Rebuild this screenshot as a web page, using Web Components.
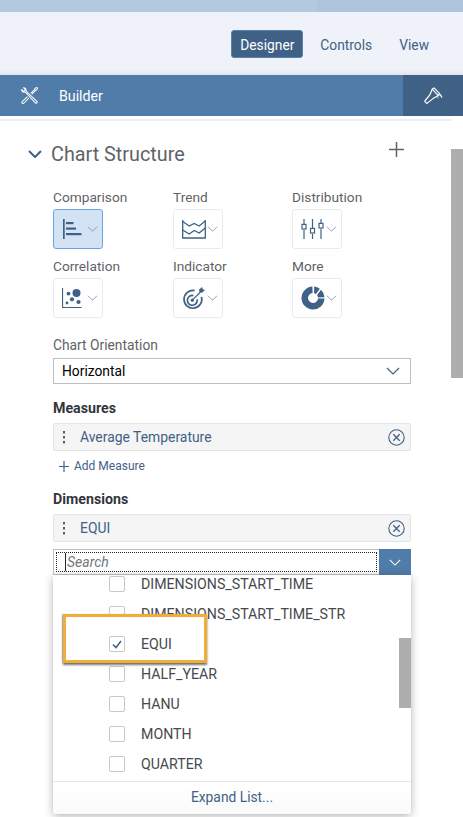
<!DOCTYPE html>
<html><head><meta charset="utf-8"><style>
html,body{margin:0;padding:0;background:#fff;height:817px;overflow:hidden}
body{font-family:Roboto,"Noto Sans",sans-serif;font-size:14px;color:#32363a}
</style></head><body>
<x-shell>
  <x-tabs><x-tab active>Designer</x-tab><x-tab>Controls</x-tab><x-tab>View</x-tab></x-tabs>
  <x-builder-bar>Builder</x-builder-bar>
  <x-panel>
    <x-section-head>Chart Structure</x-section-head>
    <x-type-grid>
      <x-chart-type label="Comparison" selected icon="bar"></x-chart-type>
      <x-chart-type label="Trend" icon="area"></x-chart-type>
      <x-chart-type label="Distribution" icon="box"></x-chart-type>
      <x-chart-type label="Correlation" icon="scatter"></x-chart-type>
      <x-chart-type label="Indicator" icon="target"></x-chart-type>
      <x-chart-type label="More" icon="donut"></x-chart-type>
    </x-type-grid>
    <x-label style="margin-top:19px">Chart Orientation</x-label>
    <x-select style="margin-top:5px">Horizontal</x-select>
    <x-label bold style="margin-top:16px">Measures</x-label>
    <x-token style="margin-top:7px">Average Temperature</x-token>
    <x-add-link style="margin-top:7px">Add Measure</x-add-link>
    <x-label bold style="margin-top:17px">Dimensions</x-label>
    <x-token style="margin-top:7px">EQUI</x-token>
    <x-search style="margin-top:7px"></x-search>
    <x-dropdown footer="Expand List...">
      <x-option>DIMENSIONS_START_TIME</x-option>
      <x-option>DIMENSIONS_START_TIME_STR</x-option>
      <x-option checked>EQUI</x-option>
      <x-option>HALF_YEAR</x-option>
      <x-option>HANU</x-option>
      <x-option>MONTH</x-option>
      <x-option>QUARTER</x-option>
    </x-dropdown>
  </x-panel>
</x-shell>
<script>
const C='#3f6185';
const chev=(col,w=14,h=8,sw=1.2)=>`<svg style="display:block" width="${w}" height="${h}" viewBox="0 0 14 8" fill="none" stroke="${col}" stroke-width="${sw}"><path d="M1 1l6 6 6-6"/></svg>`;
const icons={
bar:`<svg width="20" height="20" viewBox="0 0 20 20" fill="${C}"><rect x="1" y="0" width="1.7" height="20"/><rect x="4" y="3" width="7.5" height="2.2"/><rect x="4" y="8.5" width="10" height="2.2"/><rect x="4" y="14" width="15.5" height="2.2"/></svg>`,
area:`<svg width="24" height="20" viewBox="0 0 24 20" fill="none" stroke="${C}" stroke-width="1.3"><path d="M.7 1v18h22.6V1"/><path d="M.7 2.5l6.5 4.5 5-2.5 5 2.5 6-5"/><path d="M.7 11l6.5 4 5-3.5 5 2.5 6-5"/></svg>`,
box:`<svg width="23" height="20" viewBox="0 0 23 20" fill="none" stroke="${C}" stroke-width="1.2"><path d="M3 0v5M3 11v9M11.5 0v9M11.5 15v5M20 0v4M20 10v10"/><rect x="1" y="5.4" width="4" height="4.6"/><rect x="9.5" y="9.4" width="4" height="4.6"/><rect x="18" y="4.4" width="4" height="4.6"/></svg>`,
scatter:`<svg width="20" height="20" viewBox="0 0 20 20" fill="${C}"><path d="M0 0h1.1v18.9H19.6V20H0z"/><circle cx="14.5" cy="5" r="4"/><circle cx="6.5" cy="5.6" r="1.9"/><circle cx="10" cy="11.3" r="2.1"/><circle cx="16.5" cy="14" r="2.1"/><circle cx="5" cy="15" r="1.4"/></svg>`,
target:`<svg width="23" height="23" viewBox="0 0 23 23" fill="none" stroke="${C}" stroke-width="1.7"><path d="M12.6 3.6A8.9 8.9 0 1 0 19.5 10"/><path d="M11.4 8.6a4.9 4.9 0 1 0 3.7 3.8"/><circle cx="10.3" cy="13.2" r="1.6" fill="${C}" stroke="none"/><path d="M10.3 13.2L18.5 5" stroke-width="1.2"/><path d="M17 2.8l.6 2.4 2.4.6L23 3l-2.2-.7L20 0z" fill="${C}" stroke="none"/></svg>`,
donut:`<svg width="24" height="24" viewBox="-12 -12 24 24" fill="${C}">
<path d="M1.2-11.5A11.5 11.5 0 0 1 6.8-9.2L3-4.1A5 5 0 0 0 1-4.8z"/>
<path d="M8-8.2A11.5 11.5 0 0 1 11.5-.8L5-.5A5 5 0 0 0 4.1-3z"/>
<path d="M11.5 .6A11.5 11.5 0 1 1-.6-11.5L-.4-5A5 5 0 1 0 5 .4z"/></svg>`
};
function def(name,css,html){
  customElements.define(name,class extends HTMLElement{
    connectedCallback(){
      if(this.shadowRoot)return;
      const s=this.attachShadow({mode:'open'});
      const h=typeof html==='function'?html(this):html;
      s.innerHTML=`<style>${css}</style>${h}`;
    }
  });
}
def('x-shell',':host{display:block;position:relative;height:817px;overflow:hidden} .top{height:12px;background:linear-gradient(90deg,#b3c9df 0,#b3c9df 317px,#aec4dd 317px)}','<div class="top"></div><slot></slot>');
def('x-tabs',':host{display:flex;justify-content:flex-end;align-items:flex-start;box-sizing:border-box;height:63px;padding:18px 33px 0 0;background:#eff3f9;box-shadow:inset 0 -6px 6px -6px rgba(0,0,0,.12)}','<slot></slot>');
def('x-tab',`:host{display:block;box-sizing:border-box;height:28px;line-height:28px;font-size:13.8px;color:${C};margin-left:25px;border:1px solid transparent;border-radius:3px;text-align:center}
:host([active]){background:${C};color:#fff;border-color:#5a82ac;width:72px;margin-right:-9px}`,'<slot></slot>');
def('x-builder-bar',`:host{display:flex;align-items:center;height:41px;background:#507caa;color:#fff;font-size:14.2px}
.t{margin:0 0 0 21px;width:17px;height:17px} .l{margin-left:21px;flex:1} .r{width:60px;height:41px;background:${C};display:flex;align-items:center;justify-content:center}`,
`<svg class="t" viewBox="0 0 18 18" fill="none" stroke="#fff" stroke-width="1.1" stroke-linejoin="round"><path d="M5.4 3.4C5.4 1.8 4.1.6 2.7.7L4.6 2.8 2.8 4.6.7 2.7C.6 4.2 1.8 5.5 3.4 5.5c.4 0 .7-.1 1-.2l10.8 11.4c.5.5 1.2.5 1.6 0 .5-.5.5-1.1 0-1.6L5.3 4.4c.1-.3.1-.7.1-1z"/><path d="M6.9 10.1L1.3 15.6c-.5.5-.5 1.1 0 1.6s1.1.5 1.6 0l5.6-5.5M10.4 6.7l4.2-4.1.3-1.1L16.6.5l1 1-1 1.7-1.1.3-3.9 4.1"/></svg>
<span class="l"><slot></slot></span>
<span class="r"><svg width="19" height="18" viewBox="0 0 19 18" fill="none" stroke="#fff" stroke-width="1.2" stroke-linejoin="round"><path d="M8.2 2.2L10 .9l5.6 5.8-1.3 1.9z"/><path d="M8.2 2.2L6 7.6 1.2 13.5c-.5.5-.4 1 0 1.4l1 1c.4.4 1 .4 1.4 0L9 11.6l5.3-3"/><path d="M3 14.5h.1"/><path d="M15.8 7.5l1.6 1.7.3 1.3M13.5 10.5h.8" stroke-width="1.3"/></svg></span>`);
def('x-panel',':host{display:block;position:relative;padding:5px 0 0 53px;} .line{position:absolute;left:0;top:3px;width:451px;height:2px;background:#e8eef7} .sb{position:absolute;left:451px;top:33px;width:12px;height:229px;background:#aeaeae} .w{width:358px}','<div class="line"></div><div class="sb"></div><div class="w"><slot></slot></div>');
def('x-section-head',`:host{display:block;position:relative;height:30px;margin:18px 0 20px -2px;font-size:19.8px;color:#5f6368;line-height:32px}
.c{position:absolute;left:-23px;top:11px} .p{position:absolute;left:338px;top:3px}`,
`<span class="c">${chev(C,14,8,2)}</span><slot></slot><svg class="p" width="15" height="15" viewBox="0 0 15 15" stroke="#5f6368" stroke-width="1.5"><path d="M7.5 0v15M0 7.5h15"/></svg>`);
def('x-type-grid',':host{display:grid;grid-template-columns:120px 119px 119px;row-gap:9px}','<slot></slot>');
def('x-chart-type',`:host{display:block;font-size:13.7px;color:#5f6368}
.l{height:16px;line-height:16px;white-space:nowrap}
.b{box-sizing:border-box;margin-top:4px;width:50px;height:40px;border:1px solid #e9ebee;border-radius:3px;background:#fff;display:flex;align-items:center;position:relative;padding-left:8px}
:host([selected]) .b{background:#d4e3f4;border-color:#6aa5e3}
.ch{position:absolute;right:4px;top:16px}`,
t=>`<div class="l">${t.getAttribute('label')}</div><div class="b">${icons[t.getAttribute('icon')]}<span class="ch">${chev('#6f8cab',11,6,1.1)}</span></div>`);
def('x-label',`:host{display:block;height:16px;line-height:16px;font-size:13.8px;color:#5f6368}
:host([bold]){font-weight:700;color:#32363a;font-size:14.2px}`,'<slot></slot>');
def('x-select',`:host{display:flex;align-items:center;justify-content:space-between;box-sizing:border-box;height:26px;border:1px solid #bfbfbf;background:#fff;padding:0 10px 0 8px;font-size:13.8px;color:#000}`,`<slot></slot>${chev(C,14,8,1.2)}`);
def('x-token',`:host{display:flex;align-items:center;box-sizing:border-box;height:28px;border:1px solid #e5e5e5;border-radius:2px;background:#f5f5f5;color:${C};font-size:13.9px;position:relative;padding-left:26px}
.d{position:absolute;left:9px;top:7px} .x{position:absolute;right:5px;top:5px}`,
`<svg class="d" width="2" height="13" fill="${C}"><rect width="2" height="2.4" y="0"/><rect width="2" height="2.4" y="5"/><rect width="2" height="2.4" y="10"/></svg><slot></slot>
<svg class="x" width="17" height="17" viewBox="0 0 17 17" fill="none" stroke="${C}" stroke-width="1.1"><circle cx="8.5" cy="8.5" r="7.7"/><path d="M5.3 5.3l6.4 6.4M11.7 5.3l-6.4 6.4" stroke-width="1.3"/></svg>`);
def('x-add-link',`:host{display:flex;align-items:center;height:16px;padding-left:6px;font-size:12px;color:${C}}
svg{margin-right:5px}`,`<svg width="10" height="11" viewBox="0 0 10 11" stroke="${C}" stroke-width="1.2"><path d="M5 0v11M0 5.5h10"/></svg><slot></slot>`);
def('x-search',`:host{display:flex;height:26px;box-sizing:border-box}
.f{flex:1;box-sizing:border-box;border:1px solid #bfbfbf;border-right:0;padding:2px;background:#fff}
.i{box-sizing:border-box;height:100%;border:1px dotted #222;display:flex;align-items:center;font-style:italic;font-size:14px;color:#73777b;padding-left:8px}
.i span{border-left:1px solid #222;line-height:18px;padding-left:1px;height:18px}
.b{width:32px;background:#507caa;display:flex;align-items:center;justify-content:center}`,
`<div class="f"><div class="i"><span>Search</span></div></div><div class="b">${chev('#fff',12,7,1.2)}</div>`);
def('x-dropdown',`:host{display:block;position:relative;height:239px;background:#fff;border-radius:0 0 4px 4px;box-shadow:0 2px 8px rgba(0,0,0,.3)}
.list{height:206px;overflow:hidden}
.in{margin-top:-6px}
.sb{position:absolute;right:0;top:63px;width:12px;height:70px;background:#aeaeae}
.hl{position:absolute;left:10px;top:39px;width:144px;height:49px;box-sizing:border-box;background:#fff;border:3px solid #f0ae38;box-shadow:0 2px 2px 0 rgba(0,0,0,.55),-1px 0 1px rgba(0,0,0,.2);z-index:1}
.f{box-sizing:border-box;height:33px;border-top:1px solid #e5e5e5;text-align:center;line-height:31px;color:${C};font-size:13.8px;background:linear-gradient(#fff,#fafafa);border-radius:0 0 4px 4px}`,
t=>`<div class="list"><div class="in"><slot></slot></div></div><div class="sb"></div><div class="hl"></div><div class="f">${t.getAttribute('footer')}</div>`);
def('x-option',`:host{display:flex;align-items:center;height:30px;padding-left:56px;font-size:14.2px;color:#46494d;white-space:nowrap}
:host([checked]){position:relative;z-index:2}
.c{box-sizing:border-box;width:16px;height:16px;border:1px solid #c8c8c8;border-radius:2px;background:#fff;margin-right:16px;display:flex;align-items:center;justify-content:center}`,
t=>`<span class="c">${t.hasAttribute('checked')?`<svg width="10" height="9" viewBox="0 0 10 9" fill="none" stroke="${C}" stroke-width="1.5"><path d="M1 4.5L4 7.5 9 1"/></svg>`:''}</span><slot></slot>`);
</script>
</body></html>
